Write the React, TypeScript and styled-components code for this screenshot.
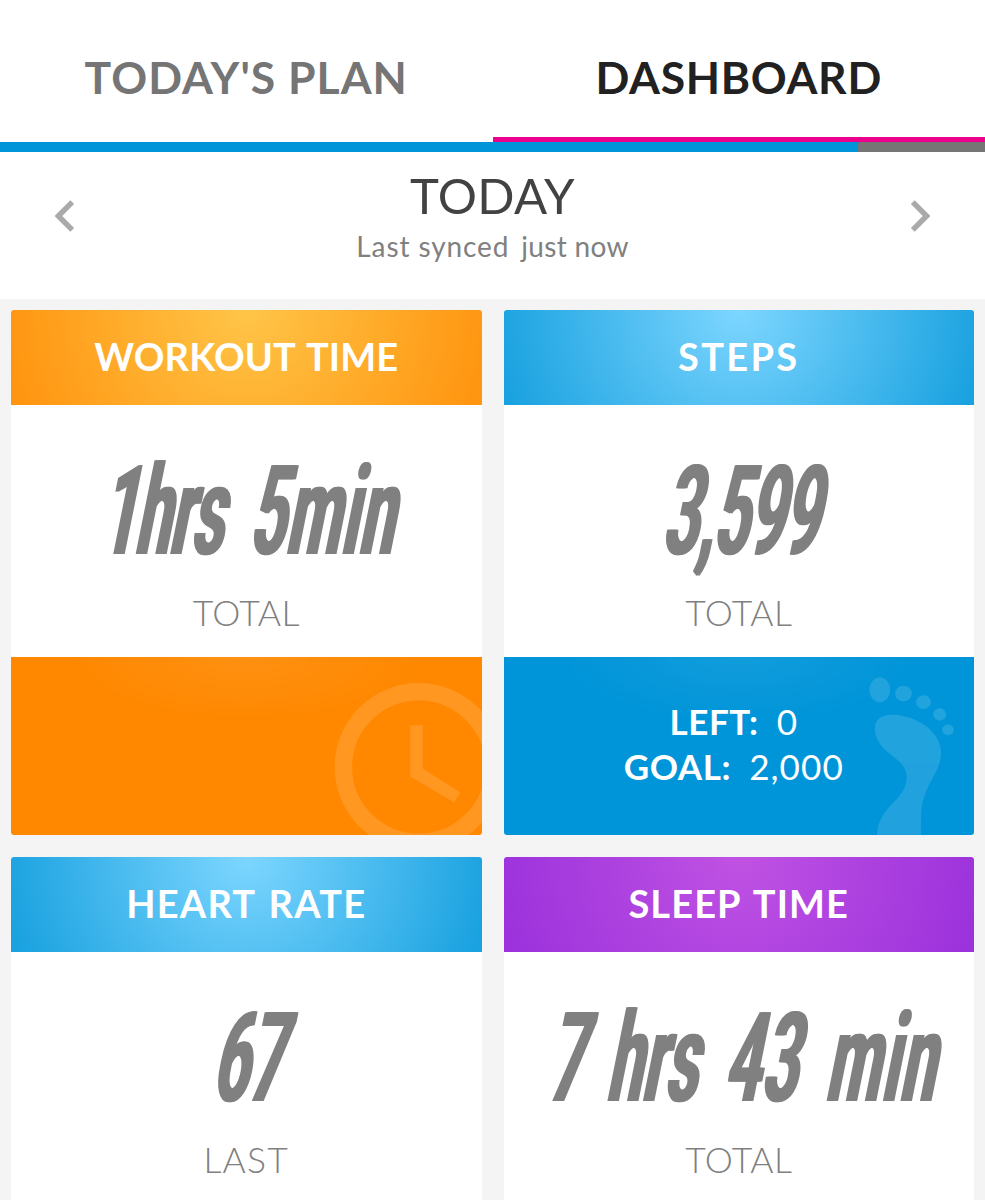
import React from 'react';
import styled, { createGlobalStyle } from 'styled-components';

const GlobalStyle = createGlobalStyle`
  *, *::before, *::after { box-sizing: border-box; }
  body { margin: 0; background: #f4f4f4; }
`;

const Page = styled.main`
  width: 985px;
  height: 1200px;
  overflow: hidden;
  background: #f4f4f4;
  font-family: Lato, 'Liberation Sans', sans-serif;
`;

const Tabs = styled.nav`
  display: grid;
  grid-template-columns: 1fr 1fr;
  height: 142px;
  background: #fff;
`;

const Tab = styled.div<{ $active?: boolean; $tracking: number }>`
  padding-top: 47px;
  border-bottom: 5px solid ${(p) => (p.$active ? '#ec008c' : 'transparent')};
  color: ${(p) => (p.$active ? '#212121' : '#757575')};
  font-size: 44.5px;
  font-weight: 700;
  line-height: 60px;
  letter-spacing: ${(p) => p.$tracking}px;
  text-align: center;
  white-space: nowrap;
`;

const Progress = styled.div`
  height: 10px;
  background: #757575;
`;

const ProgressFill = styled.div`
  width: 858px;
  height: 100%;
  background: #0095d9;
`;

const DateBar = styled.section`
  display: flex;
  justify-content: space-between;
  height: 147px;
  padding: 0 54.5px;
  background: #fff;
`;

const DateText = styled.div`
  padding-top: 13px;
  text-align: center;
`;

const DateTitle = styled.h1`
  margin: 0;
  color: #424242;
  font-size: 49px;
  font-weight: 400;
  line-height: 60px;
  letter-spacing: 0.4px;
`;

const SyncStatus = styled.p`
  display: flex;
  justify-content: center;
  gap: 12px;
  margin: 0;
  color: #808080;
  font-size: 28px;
  font-weight: 400;
  line-height: 42px;
`;

const SyncPart = styled.span<{ $tracking: number }>`
  letter-spacing: ${(p) => p.$tracking}px;
`;

const Arrow = styled.svg`
  width: 20px;
  height: 32px;
  margin-top: 47.5px;
  fill: none;
  stroke: #aaa;
  stroke-width: 5.4;
`;

const Grid = styled.section`
  display: grid;
  grid-template-columns: 1fr 1fr;
  gap: 22px;
  padding: 11px;
`;

const Card = styled.article`
  height: 525px;
  display: flex;
  flex-direction: column;
  overflow: hidden;
  border-radius: 3px;
  background: #fff;
`;

type Tone = 'orange' | 'blue' | 'purple';

const tones: Record<Tone, { glow: string; edge: string; base: string }> = {
  orange: { glow: '#ffc548', edge: '#ff9510', base: '#ff8800' },
  blue: { glow: '#7dd6ff', edge: '#1aa2e0', base: '#0095d9' },
  purple: { glow: '#c052e3', edge: '#9c32dc', base: '#9026d6' },
};

const CardHeader = styled.h2<{ $tone: Tone; $tracking: number }>`
  height: 95px;
  margin: 0;
  padding-bottom: 4px;
  display: flex;
  align-items: center;
  justify-content: center;
  background: radial-gradient(
    circle 245px at 50% 0,
    ${(p) => tones[p.$tone].glow},
    ${(p) => tones[p.$tone].edge}
  );
  color: #fff;
  font-size: 38px;
  font-weight: 700;
  letter-spacing: ${(p) => p.$tracking}px;
  word-spacing: 3px;
`;

const CardBody = styled.div`
  height: 251.5px;
  padding-top: 47px;
`;

/* Condensed, slanted display numerals; the slant pivots on the baseline.
   Side shadows thicken the stems that the horizontal squeeze thins out. */
const Figure = styled.div<{ $indent?: number }>`
  display: flex;
  justify-content: center;
  gap: 54px;
  padding-left: ${(p) => p.$indent ?? 0}px;
  color: #808080;
  font-family: Roboto, 'Liberation Sans', sans-serif;
  font-size: 125px;
  font-weight: 700;
  line-height: 120px;
  text-shadow: 2.8px 0 0 #808080, -2.8px 0 0 #808080;
  white-space: nowrap;
  transform: skewX(-11.4deg) scaleX(0.495);
  transform-origin: 50% 102.7px;
`;

const FigureWord = styled.span<{ $tracking: number }>`
  letter-spacing: ${(p) => p.$tracking}px;
`;

const Caption = styled.div<{ $tracking: number }>`
  margin-top: 21px;
  color: #808080;
  font-size: 35.5px;
  font-weight: 300;
  line-height: 40px;
  letter-spacing: ${(p) => p.$tracking}px;
  text-align: center;
`;

const CardFooter = styled.div<{ $tone: Tone }>`
  position: relative;
  flex: 1;
  padding: 42.3px 10px 0 0;
  background: radial-gradient(ellipse 175px 64px at 50% 0, rgba(255, 255, 255, 0.07), rgba(255, 255, 255, 0)),
    ${(p) => tones[p.$tone].base};
`;

const Watermark = styled.svg`
  position: absolute;
  inset: 0;
  width: 470.5px;
  height: 178.5px;
  fill: #fff;
  opacity: 0.13;
`;

const Stat = styled.div`
  display: flex;
  justify-content: center;
  gap: 18px;
  color: #fff;
  font-size: 35px;
  line-height: 44.7px;
`;

const StatLabel = styled.b`
  font-weight: 700;
  letter-spacing: 0.6px;
`;

const StatValue = styled.span`
  letter-spacing: 1.1px;
`;

const ClockMark = () => (
  <Watermark viewBox="0 0 470.5 178.5">
    <circle cx="407.7" cy="110" r="75.3" fill="none" stroke="#fff" strokeWidth="17.4" />
    <path d="M399.3 68.2h12.4v43.3l37.6 24-6 10-44-26z" />
  </Watermark>
);

const FootMark = () => (
  <Watermark viewBox="0 0 470.5 178.5">
    <g transform="translate(-11.5 -16.5) scale(0.3333)">
      <ellipse cx="1162" cy="148" rx="31" ry="37" />
      <ellipse cx="1233" cy="159" rx="25" ry="23.5" />
      <ellipse cx="1293" cy="185" rx="22" ry="21" />
      <ellipse cx="1341.5" cy="222" rx="19.5" ry="18.5" />
      <ellipse cx="1366.5" cy="268" rx="17.5" ry="16" />
      <path d="M1147 268C1146 238 1165 223 1200 223C1275 225 1346 275 1346 338C1343 400 1294 430 1286 515L1285 590H1153C1157 488 1243 485 1243 408C1238 345 1155 345 1147 268Z" />
    </g>
  </Watermark>
);

type Part = [text: string, tracking: number];

interface Metric {
  title: Part;
  tone: Tone;
  words: Part[];
  indent?: number;
  caption: Part;
  stats?: [label: string, value: string][];
  mark?: React.ReactNode;
}

const metrics: Metric[] = [
  {
    title: ['WORKOUT TIME', 0.1],
    tone: 'orange',
    words: [['1hrs', -1.2], ['5min', 2.8]],
    caption: ['TOTAL', 0.4],
    mark: <ClockMark />,
  },
  {
    title: ['STEPS', 2.3],
    tone: 'blue',
    words: [['3,599', -0.6]],
    caption: ['TOTAL', 0.4],
    stats: [['LEFT:', '0'], ['GOAL:', '2,000']],
    mark: <FootMark />,
  },
  {
    title: ['HEART RATE', 1.2],
    tone: 'blue',
    words: [['67', -1]],
    caption: ['LAST', 1.2],
  },
  {
    title: ['SLEEP TIME', 1.1],
    tone: 'purple',
    words: [['7', -7], ['hrs', 1], ['43', 4], ['min', 4]],
    indent: 7,
    caption: ['TOTAL', 0.4],
  },
];

const MetricCard = ({ title, tone, words, indent, caption, stats, mark }: Metric) => (
  <Card>
    <CardHeader $tone={tone} $tracking={title[1]}>{title[0]}</CardHeader>
    <CardBody>
      <Figure $indent={indent}>
        {words.map(([text, tracking]) => (
          <FigureWord key={text} $tracking={tracking}>{text}</FigureWord>
        ))}
      </Figure>
      <Caption $tracking={caption[1]}>{caption[0]}</Caption>
    </CardBody>
    <CardFooter $tone={tone}>
      {mark}
      {stats?.map(([label, value]) => (
        <Stat key={label}>
          <StatLabel>{label}</StatLabel>
          <StatValue>{value}</StatValue>
        </Stat>
      ))}
    </CardFooter>
  </Card>
);

export default function App() {
  return (
    <>
      <GlobalStyle />
      <Page>
        <Tabs>
          <Tab $tracking={1}>TODAY'S PLAN</Tab>
          <Tab $active $tracking={0.7}>DASHBOARD</Tab>
        </Tabs>
        <Progress>
          <ProgressFill />
        </Progress>
        <DateBar>
          <Arrow viewBox="0 0 20 32">
            <path d="M17.2 2.2L3.4 16L17.2 29.8" />
          </Arrow>
          <DateText>
            <DateTitle>TODAY</DateTitle>
            <SyncStatus>
              <SyncPart $tracking={0.9}>Last synced</SyncPart>
              <SyncPart $tracking={0.3}>just now</SyncPart>
            </SyncStatus>
          </DateText>
          <Arrow viewBox="0 0 20 32">
            <path d="M2.8 2.2L16.6 16L2.8 29.8" />
          </Arrow>
        </DateBar>
        <Grid>
          {metrics.map((metric) => (
            <MetricCard key={metric.title[0]} {...metric} />
          ))}
        </Grid>
      </Page>
    </>
  );
}
